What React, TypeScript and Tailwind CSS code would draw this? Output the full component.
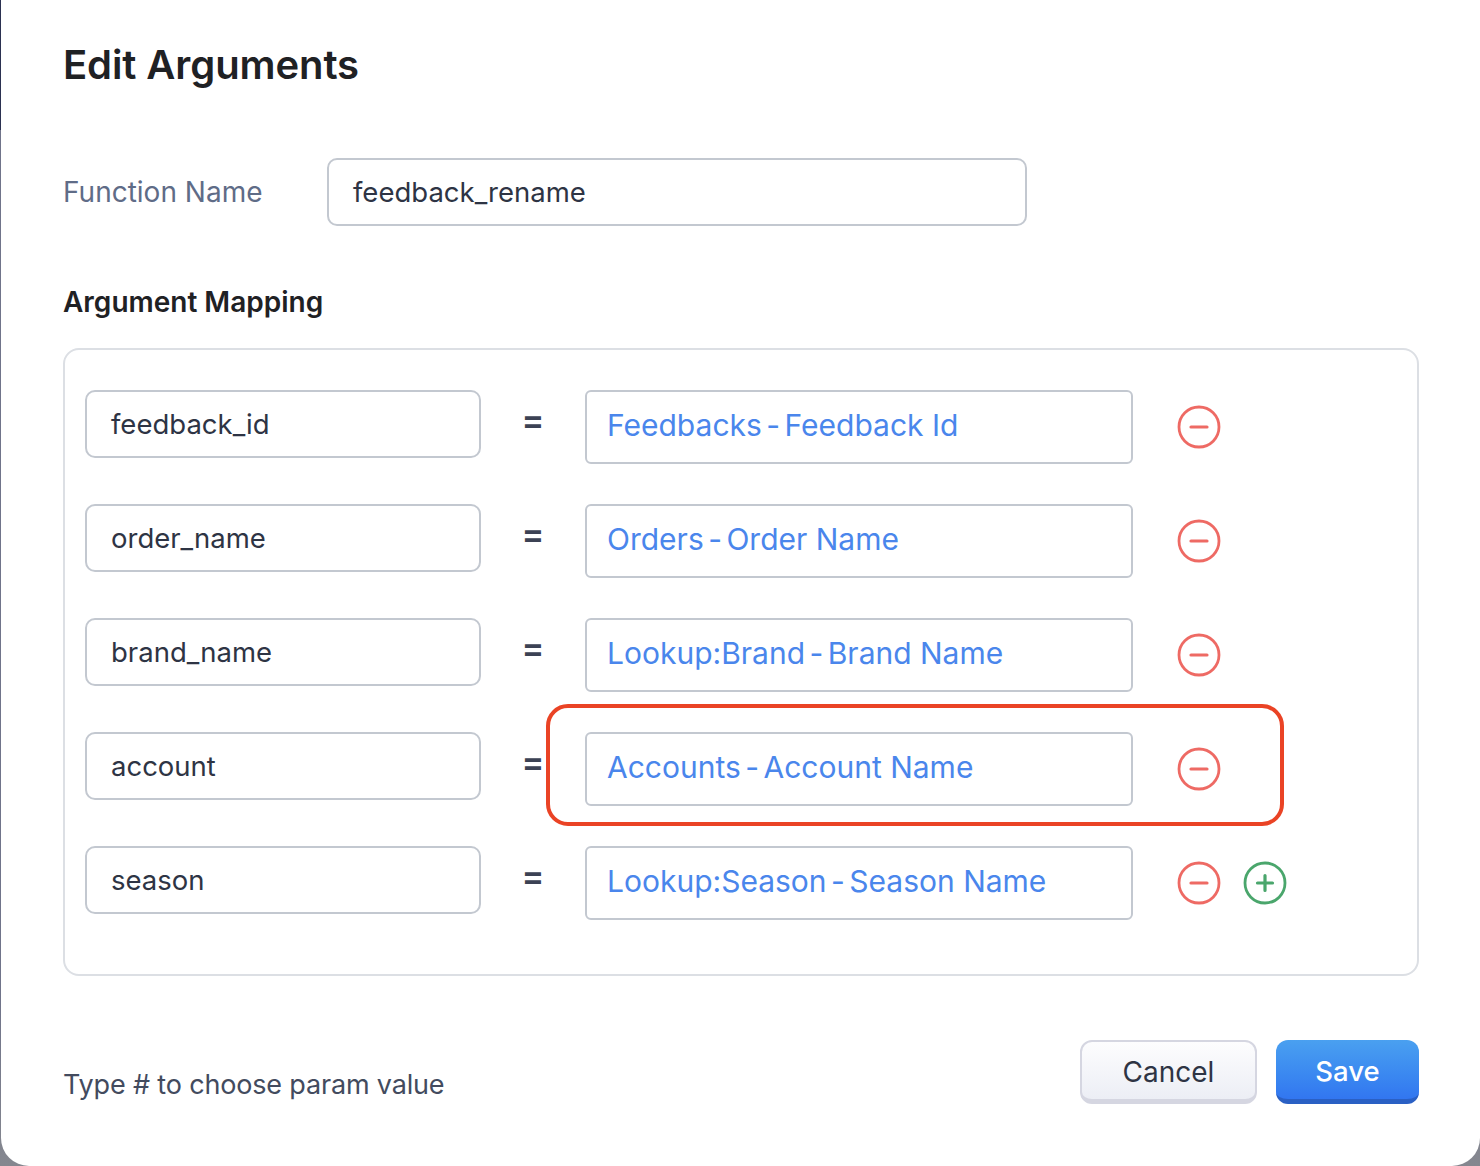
const rows = [
  { name: 'feedback_id', source: 'Feedbacks', field: 'Feedback Id' },
  { name: 'order_name', source: 'Orders', field: 'Order Name' },
  { name: 'brand_name', source: 'Lookup:Brand', field: 'Brand Name' },
  { name: 'account', source: 'Accounts', field: 'Account Name' },
  { name: 'season', source: 'Lookup:Season', field: 'Season Name' },
]

function CircleIcon({ plus }: { plus?: boolean }) {
  return (
    <svg width="44" height="44" viewBox="0 0 44 44" fill="none" stroke={plus ? '#4aa66c' : '#ee6a64'} strokeWidth="2.8" aria-hidden>
      <circle cx="22" cy="22" r="20" />
      <path d={plus ? 'M14.5 22h15M22 14.5v15' : 'M14 22h16'} strokeWidth="3.2" strokeLinecap="round" />
    </svg>
  )
}

export default function App() {
  return (
    <div className="h-[1166px] w-[1480px] overflow-hidden bg-[linear-gradient(180deg,#2b3151_0,#2b3151_130px,#70748a_130px,#70748a_1000px,#85878f_1166px)] pl-px font-['Inter',sans-serif]">
      <div className="flex h-full flex-col rounded-b-[28px] bg-white pl-[62px] pr-[61px]">
        <h1 className="mt-[40px] text-[40px] leading-[50px] font-semibold tracking-[-0.1px] text-[#1f2124]">Edit Arguments</h1>

        <div className="mt-[68px] flex items-center">
          <span className="w-[264px] text-[28px] leading-none text-[#5f6c87]">Function Name</span>
          <div className="flex h-[68px] w-[700px] items-center rounded-[10px] border-2 border-[#c3c8d0] pt-[2px] pl-[24px] text-[27.5px] text-[#2e3444]">feedback_rename</div>
        </div>

        <h2 className="mt-[58px] text-[28px] leading-[36px] font-semibold text-[#1f2124]">Argument Mapping</h2>

        <div className="relative mt-[28px] flex h-[628px] flex-col gap-[40px] rounded-[16px] border-2 border-[#dcdfe4] pt-[40px] pl-[20px]">
          {rows.map((row, i) => (
            <div key={row.name} className="flex h-[74px] items-start">
              <div className="flex h-[68px] w-[396px] items-center rounded-[10px] border-2 border-[#c3c8d0] pt-[2px] pl-[24px] text-[27.5px] text-[#2e3444]">{row.name}</div>
              <span className="w-[104px] pt-[10px] text-center text-[34px] leading-[40px] font-semibold text-[#3c4254]">=</span>
              <div className="flex h-[74px] w-[548px] items-center rounded-[6px] border-2 border-[#c3c8d0] pb-[4px] pl-[20px] text-[30px] text-[#4a86ec]">
                <span>
                  {row.source} <span className="-mx-[4px]">-</span> {row.field}
                </span>
              </div>
              <div className="ml-[44px] flex items-center gap-[22px] pt-[15px]">
                <CircleIcon />
                {i === rows.length - 1 && <CircleIcon plus />}
              </div>
            </div>
          ))}
          {/* red highlight */}
          <div className="absolute top-[354px] left-[481px] h-[122px] w-[738px] rounded-[22px] border-[4.5px] border-[#ea4325]" />
        </div>

        <div className="mt-[64px] flex items-start justify-between">
          <span className="mt-[28px] text-[27px] leading-[34px] tracking-[-0.17px] text-[#434b5e]">Type # to choose param value</span>
          <div className="flex gap-[19px]">
            <button className="h-[64px] w-[177px] rounded-[12px] border-2 border-b-[5px] border-[#d5d6e1] bg-linear-to-b from-[#fdfdfe] to-[#eceef5] pt-[3px] text-[28px] text-[#2e3444]">Cancel</button>
            <button className="h-[64px] w-[143px] rounded-[12px] border-b-[5px] border-[#2a60c4] bg-linear-to-b from-[#4aa0f0] to-[#3276f0] pt-[4px] text-[27.5px] font-medium text-white">Save</button>
          </div>
        </div>
      </div>
    </div>
  )
}
